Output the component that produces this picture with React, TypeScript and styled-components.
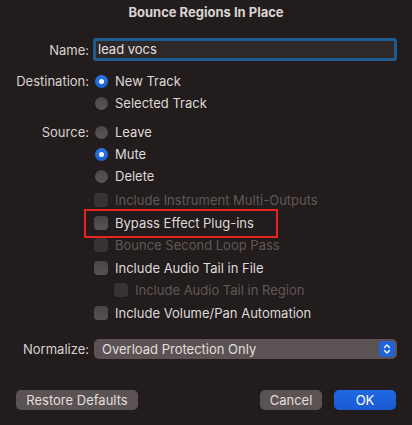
import React from "react";
import styled, { createGlobalStyle } from "styled-components";

const GlobalStyle = createGlobalStyle`
  html, body {
    margin: 0;
    padding: 0;
    background: #231c1c;
  }
  body {
    font-family: Inter, "Noto Sans", "Liberation Sans", sans-serif;
    font-size: 13px;
    color: #dcd7d7;
  }
`;

const Dialog = styled.div`
  width: 412px;
  height: 425px;
  display: flex;
  flex-direction: column;
  background: #231c1c;
  box-sizing: border-box;
`;

const Title = styled.div`
  margin-top: 4px;
  height: 16px;
  line-height: 16px;
  text-align: center;
  font-weight: 700;
  font-size: 13px;
  color: #d9d4d4;
`;

const FieldRow = styled.div<{ $top: number }>`
  display: grid;
  grid-template-columns: 89px 1fr;
  column-gap: 4px;
  margin-top: ${(p) => p.$top}px;
  padding-right: 15px;
`;

const Label = styled.div<{ $center?: boolean }>`
  text-align: right;
  height: 22px;
  line-height: 22px;
  align-self: ${(p) => (p.$center ? "center" : "start")};
  color: #d8d3d3;
  white-space: nowrap;
`;

const NameInput = styled.div`
  height: 23px;
  box-sizing: border-box;
  border: 3px solid #1d5c8c;
  border-radius: 3px;
  background: #2f2828;
  padding-left: 2px;
  line-height: 17px;
  color: #e4e0e0;
`;

const Options = styled.div`
  display: flex;
  flex-direction: column;
`;

const Option = styled.div<{ $disabled?: boolean; $indent?: number; $h?: number }>`
  position: relative;
  display: flex;
  align-items: center;
  gap: 7px;
  height: ${(p) => p.$h ?? 22}px;
  padding-left: ${(p) => p.$indent ?? 2}px;
  color: ${(p) => (p.$disabled ? "#5f5858" : "#dedada")};
  white-space: nowrap;
`;

const Highlighted = styled(Option)`
  &::after {
    content: "";
    position: absolute;
    left: -9px;
    top: -3px;
    width: 194px;
    height: 29px;
    box-sizing: border-box;
    border: 2px solid #e5261f;
  }
`;

const Radio = styled.span<{ $on?: boolean }>`
  width: 13px;
  height: 13px;
  border-radius: 50%;
  flex-shrink: 0;
  display: flex;
  align-items: center;
  justify-content: center;
  background: ${(p) =>
    p.$on ? "linear-gradient(#2776e6, #1a62d6)" : "linear-gradient(#4c4646, #5b5555)"};
  &::after {
    content: "";
    width: 5px;
    height: 5px;
    border-radius: 50%;
    background: #ffffff;
    display: ${(p) => (p.$on ? "block" : "none")};
  }
`;

const Check = styled.span<{ $disabled?: boolean }>`
  width: 14px;
  height: 14px;
  border-radius: 4px;
  flex-shrink: 0;
  background: ${(p) =>
    p.$disabled ? "#383232" : "linear-gradient(#4a4444, #585252)"};
`;

const Popup = styled.div`
  height: 20px;
  border-radius: 5px;
  background: #5b5353;
  display: flex;
  align-items: center;
  justify-content: space-between;
  padding-left: 8px;
  padding-right: 2px;
  color: #e2dede;
  align-self: center;
  margin-left: 1px;
`;

const Stepper = styled.span`
  width: 16px;
  height: 16px;
  border-radius: 4px;
  background: #1f64d8;
  display: flex;
  align-items: center;
  justify-content: center;
`;

const ButtonBar = styled.div`
  display: flex;
  align-items: center;
  margin-top: 30px;
  padding: 0 16px;
`;

const Button = styled.div<{ $primary?: boolean; $w: number }>`
  width: ${(p) => p.$w}px;
  height: 20px;
  line-height: 20px;
  border-radius: 5px;
  text-align: center;
  background: ${(p) => (p.$primary ? "linear-gradient(#1f68e2, #1a5bd2)" : "#5b5353")};
  color: ${(p) => (p.$primary ? "#ffffff" : "#e2dede")};
`;

const Spacer = styled.div`
  flex: 1;
`;

const Gap = styled.div`
  width: 12px;
`;

const checks: { label: string; disabled?: boolean; indent?: boolean; marked?: boolean }[] = [
  { label: "Include Instrument Multi-Outputs", disabled: true },
  { label: "Bypass Effect Plug-ins", marked: true },
  { label: "Bounce Second Loop Pass", disabled: true },
  { label: "Include Audio Tail in File" },
  { label: "Include Audio Tail in Region", disabled: true, indent: true },
  { label: "Include Volume/Pan Automation" },
];

export default function App() {
  return (
    <>
      <GlobalStyle />
      <Dialog>
        <Title>Bounce Regions In Place</Title>

        <FieldRow $top={18}>
          <Label $center>Name:</Label>
          <NameInput>lead vocs</NameInput>
        </FieldRow>

        <FieldRow $top={9}>
          <Label>Destination:</Label>
          <Options>
            <Option>
              <Radio $on />
              New Track
            </Option>
            <Option>
              <Radio />
              Selected Track
            </Option>
          </Options>
        </FieldRow>

        <FieldRow $top={7}>
          <Label>Source:</Label>
          <Options>
            <Option>
              <Radio />
              Leave
            </Option>
            <Option>
              <Radio $on />
              Mute
            </Option>
            <Option>
              <Radio />
              Delete
            </Option>
          </Options>
        </FieldRow>

        <FieldRow $top={2}>
          <div />
          <Options>
            {checks.map((c) => {
              const Row = c.marked ? Highlighted : Option;
              return (
                <Row key={c.label} $disabled={c.disabled} $indent={c.indent ? 21 : 1} $h={22.5}>
                  <Check $disabled={c.disabled} />
                  {c.label}
                </Row>
              );
            })}
          </Options>
        </FieldRow>

        <FieldRow $top={14}>
          <Label $center>Normalize:</Label>
          <Popup>
            Overload Protection Only
            <Stepper>
              <svg width="8" height="12" viewBox="0 0 8 12" fill="none">
                <path d="M1.5 4.5 L4 2 L6.5 4.5" stroke="#fff" strokeWidth="1.3" strokeLinecap="round" strokeLinejoin="round" />
                <path d="M1.5 7.5 L4 10 L6.5 7.5" stroke="#fff" strokeWidth="1.3" strokeLinecap="round" strokeLinejoin="round" />
              </svg>
            </Stepper>
          </Popup>
        </FieldRow>

        <ButtonBar>
          <Button $w={122}>Restore Defaults</Button>
          <Spacer />
          <Button $w={62}>Cancel</Button>
          <Gap />
          <Button $primary $w={62}>
            OK
          </Button>
        </ButtonBar>
      </Dialog>
    </>
  );
}
